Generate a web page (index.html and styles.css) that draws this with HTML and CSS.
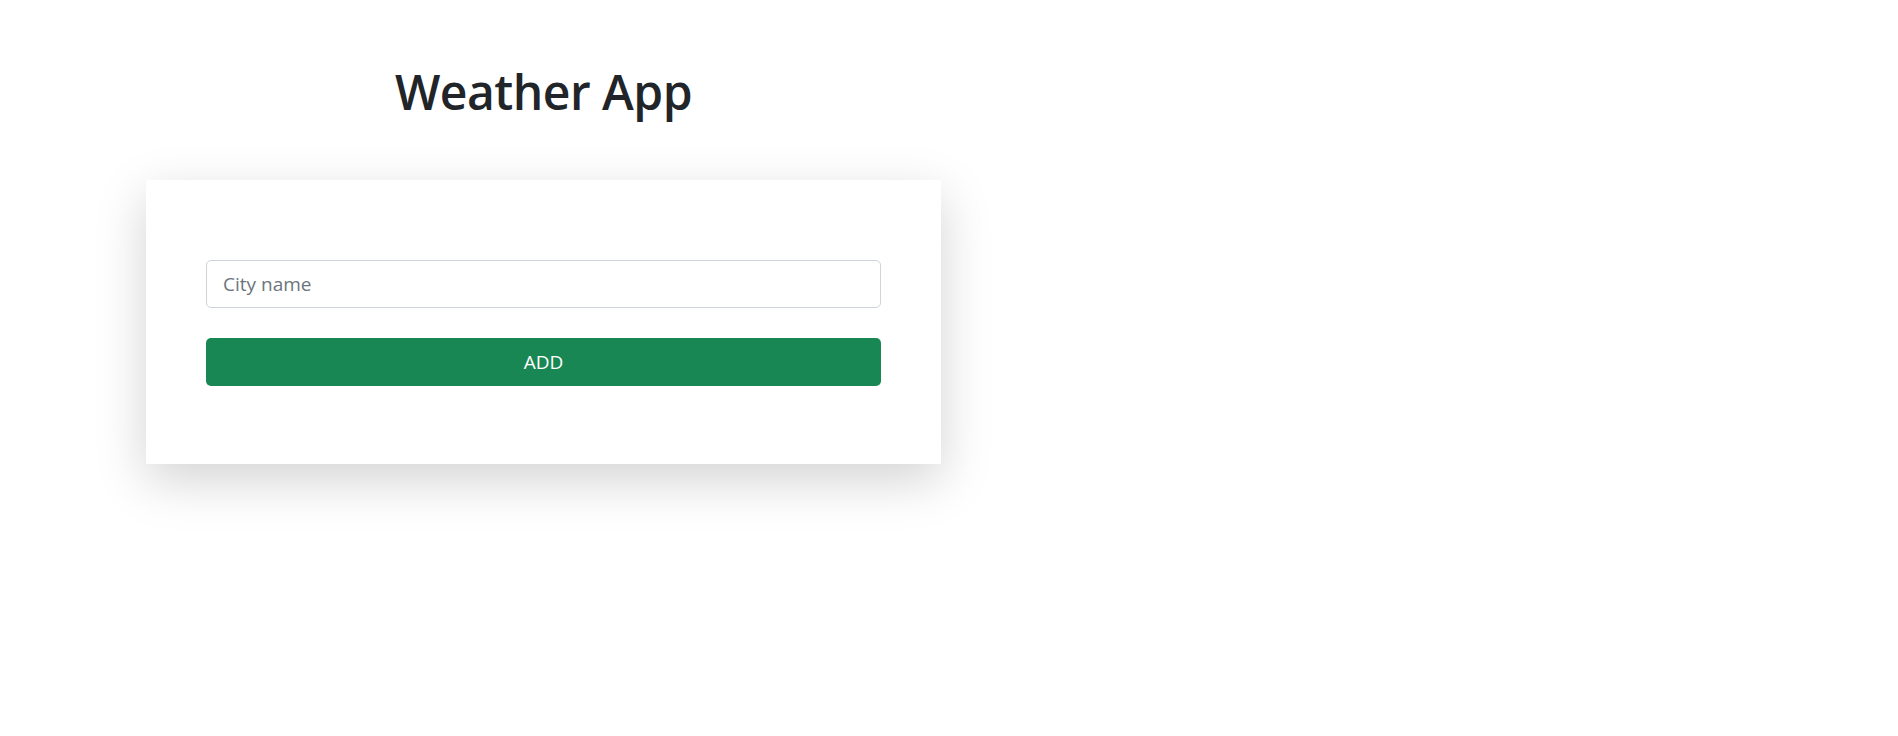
FILE: index.html
```html
<!DOCTYPE html>
<html lang="en">
<head>
<meta charset="utf-8">
<title>Weather App</title>
<link rel="stylesheet" href="styles.css">
</head>
<body>
<main class="app">
  <h1 class="title">Weather App</h1>
  <section class="card">
    <form class="form">
      <input class="field" type="text" placeholder="City name">
      <button class="btn" type="button">ADD</button>
    </form>
  </section>
</main>
</body>
</html>
```

FILE: styles.css
```css
* { box-sizing: border-box; }
html, body { margin: 0; padding: 0; background: #fff; }
body {
  min-height: 100vh;
  font-family: "Open Sans", "Noto Sans", "Liberation Sans", sans-serif;
  color: #212529;
}
.app {
  width: 795px;
  margin-left: 146px;
  padding-top: 63px;
  padding-bottom: 80px;
  display: flex;
  flex-direction: column;
}
.title {
  margin: 0;
  font-size: 48px;
  font-weight: 600;
  line-height: 58px;
  text-align: center;
  color: #212529;
  letter-spacing: -0.5px;
}
.card {
  margin-top: 59px;
  background: #fff;
  box-shadow: 0 16px 48px rgba(0, 0, 0, 0.175);
  padding: 80px 60px 78px;
}
.form {
  display: flex;
  flex-direction: column;
  gap: 30px;
}
.field {
  height: 48px;
  width: 100%;
  border: 1px solid #ced4da;
  border-radius: 5px;
  padding: 0 16px;
  font-family: inherit;
  font-size: 19px;
  color: #212529;
  outline: none;
}
.field::placeholder { color: #6c757d; }
.btn {
  height: 48px;
  width: 100%;
  border: none;
  border-radius: 5px;
  background: #198754;
  color: #fff;
  font-family: inherit;
  font-size: 19px;
  cursor: pointer;
}
```
